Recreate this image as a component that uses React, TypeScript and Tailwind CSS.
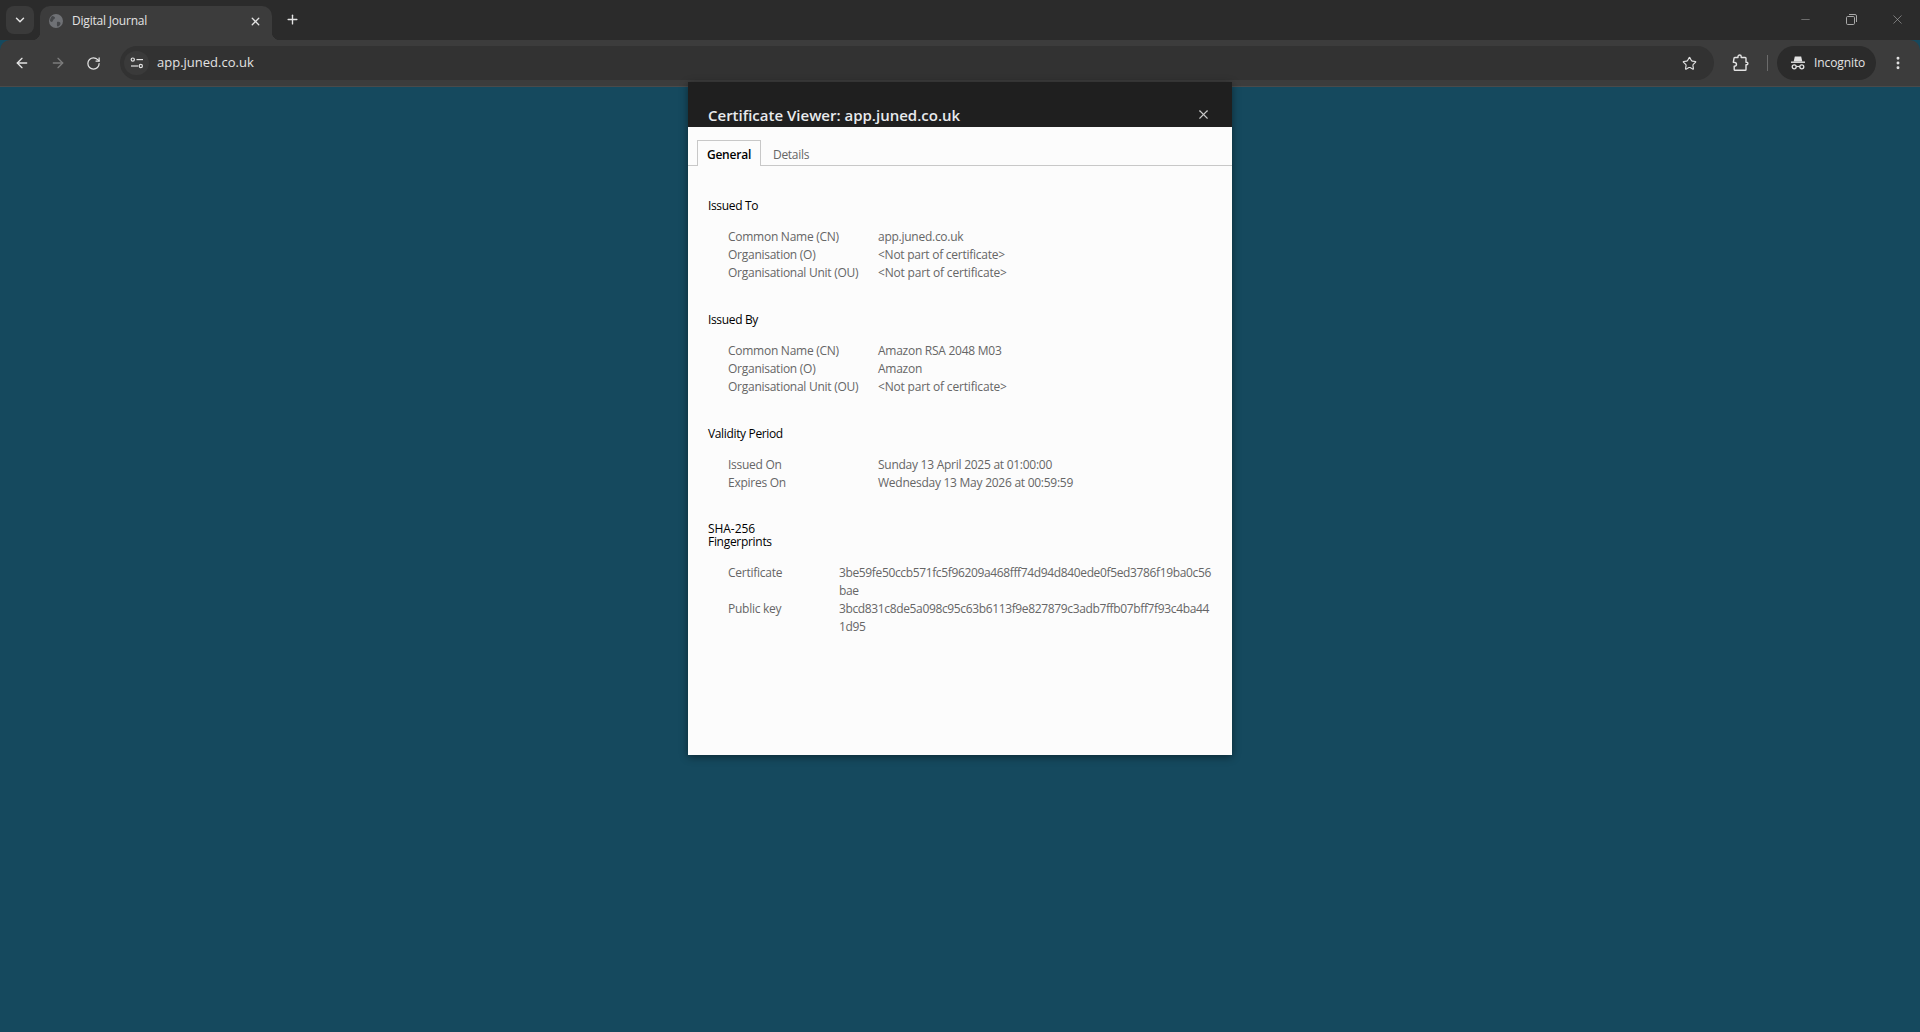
import React from "react";
import { X, Plus, ChevronDown, ArrowLeft, ArrowRight, RotateCw, Star, Minus, EllipsisVertical } from "lucide-react";

const font = "font-['Open_Sans','Noto_Sans',sans-serif]";

function Row({ label, value, narrow }: { label: string; value: React.ReactNode; narrow?: boolean }) {
  return (
    <div className={narrow ? "grid grid-cols-[111px_1fr]" : "grid grid-cols-[150px_1fr]"}>
      <div className="whitespace-nowrap">{label}</div>
      <div className={narrow ? "whitespace-nowrap tracking-[-0.36px]" : "whitespace-nowrap"}>{value}</div>
    </div>
  );
}

function Section({ title, children, className }: { title: React.ReactNode; children: React.ReactNode; className?: string }) {
  return (
    <section className={className}>
      <h2 className="text-[12px] leading-[18px] tracking-[-0.35px] text-black">{title}</h2>
      <div className="mt-[13px] pl-[20px] text-[12px] leading-[18px] tracking-[-0.26px] text-[#666666]">{children}</div>
    </section>
  );
}

function IncognitoIcon() {
  return (
    <svg width="16" height="16" viewBox="0 0 16 16" className="text-[#e3e3e3]" fill="none" stroke="currentColor">
      <path d="M3.700 6.400 4.800 1.500h6.400l1.100 4.900z" fill="currentColor" stroke="none" />
      <path d="M1 7.200h14" strokeWidth="1.400" />
      <circle cx="4.200" cy="11.800" r="2" strokeWidth="1.300" />
      <circle cx="11.800" cy="11.800" r="2" strokeWidth="1.300" />
      <path d="M6.200 11.500h3.600" strokeWidth="1.200" />
    </svg>
  );
}

function ExtensionIcon() {
  return (
    <svg width="17" height="18" viewBox="0 0 17 18" fill="none" stroke="#e3e3e3" strokeWidth="1.400" strokeLinejoin="round">
      <path d="M6 3.500V2.600a1.600 1.600 0 0 1 3.200 0v.9h4a.8.800 0 0 1 .8.800v3.900h.6a1.300 1.300 0 0 1 0 2.600H14v4.600a.8.800 0 0 1-.8.800H3a.8.800 0 0 1-.8-.8v-3.300c1.600 0 2.300-.8 2.300-1.900S3.400 8.300 1.300 8.300l.7-4a.8.800 0 0 1 .8-.8z" />
    </svg>
  );
}

function RestoreIcon() {
  return (
    <svg width="11" height="11" viewBox="0 0 11 11" fill="none" stroke="#a8a8a8">
      <rect x="0.500" y="2.500" width="8" height="8" rx="1.200" />
      <path d="M3 .5h6a1.500 1.500 0 0 1 1.500 1.500v6" />
    </svg>
  );
}

function TuneIcon() {
  return (
    <svg width="14" height="12" viewBox="0 0 14 12" fill="none" stroke="#e3e3e3" strokeWidth="1.200">
      <circle cx="2.800" cy="2.600" r="1.600" />
      <path d="M6.500 2.600H13" />
      <circle cx="10.800" cy="9" r="1.600" />
      <path d="M1 9h7.200" />
    </svg>
  );
}

function Globe() {
  return (
    <svg width="14" height="14" viewBox="0 0 14 14">
      <circle cx="7" cy="7" r="7" fill="#6f7175" />
      <path d="M3 2c2 .2 3 1 3 2S4.500 5 4 6.500 3 8.500 1 7C1 5 2 3 3 2zM8 8c2-.8 3.500 0 3.500 1.500S9.500 13 8.500 12.500 8 10 8 8z" fill="#45474a" />
    </svg>
  );
}

export default function App() {
  return (
    <div className={`flex h-[1032px] w-full flex-col overflow-hidden bg-[#15495e] ${font}`}>
      <header className="flex h-10 shrink-0 items-start bg-[#2b2b2b] pl-[6px] pr-0">
        <button className="mt-[6px] flex h-7 w-7 items-center justify-center rounded-lg bg-[#3a3a3a] text-[#e3e3e3]">
          <ChevronDown size={14} strokeWidth={2.500} />
        </button>
        <div className="relative ml-[6px] mt-[6px] flex h-[34px] w-[232px] items-center rounded-t-[10px] bg-[#3c3c3c] pb-[4px] pl-[9px] pr-[10px]">
          <span className="absolute bottom-0 left-[-8px] h-2 w-2 bg-[radial-gradient(circle_at_0_0,transparent_8px,#3c3c3c_8.500px)]" />
          <span className="absolute bottom-0 right-[-8px] h-2 w-2 bg-[radial-gradient(circle_at_100%_0,transparent_8px,#3c3c3c_8.500px)]" />
          <Globe />
          <span className="ml-[9px] flex-1 text-[12px] tracking-[-0.2px] text-[#e3e3e3]">Digital Journal</span>
          <X size={13} strokeWidth={2.400} className="text-[#e3e3e3]" />
        </div>
        <Plus size={15} strokeWidth={2.200} className="ml-[13px] mt-[12px] text-[#e3e3e3]" />
        <div className="ml-auto flex h-10 items-center pb-[1px]">
          <div className="flex w-[46px] justify-center"><Minus size={13} strokeWidth={1} className="text-[#a8a8a8]" /></div>
          <div className="flex w-[46px] justify-center"><RestoreIcon /></div>
          <div className="flex w-[46px] justify-center"><X size={15} strokeWidth={1} className="text-[#a8a8a8]" /></div>
        </div>
      </header>

      <nav className="z-0 flex h-[47px] shrink-0 items-start rounded-t-[10px] border-b border-[#4a4a4a] bg-[#3c3c3c] pl-[14px] pt-[6px]">
        <div className="flex h-[34px] items-center gap-[20px] text-[#e3e3e3]">
          <ArrowLeft size={16} strokeWidth={2} />
          <ArrowRight size={16} strokeWidth={2} className="text-[#7c7c7c]" />
          <RotateCw size={15} strokeWidth={2} />
        </div>
        <div className="ml-[19px] flex h-[34px] w-[1594px] items-center rounded-full bg-[#323232] pl-[4px] pr-[17px]">
          <div className="flex h-[24px] w-[25px] items-center justify-center rounded-full bg-[#3a3a3a]"><TuneIcon /></div>
          <span className="ml-[8px] flex-1 text-[13px] text-[#e3e3e3]">app.juned.co.uk</span>
          <Star size={15} strokeWidth={1.800} className="text-[#e3e3e3]" />
        </div>
        <div className="flex h-[34px] items-center">
          <div className="ml-[18px]"><ExtensionIcon /></div>
          <div className="ml-[18px] h-[16px] w-px bg-[#6b6b6b]" />
          <div className="ml-[9px] flex h-[34px] w-[99px] items-center rounded-full bg-[#2b2b2b] pl-[13px]">
            <IncognitoIcon />
            <span className="ml-[8px] text-[12px] tracking-[-0.1px] text-[#e3e3e3]">Incognito</span>
          </div>
          <EllipsisVertical size={16} strokeWidth={2.400} className="ml-[14px] text-[#e3e3e3]" />
        </div>
      </nav>

      <main className="z-10 mt-[-5px] flex flex-1 justify-center">
        <div className="h-[673px] w-[544px] bg-[#fcfcfc] shadow-[0_2px_8px_rgba(0,0,0,0.45)]">
          <div className="flex h-[45px] items-end justify-between bg-[#1f1f1f] pl-[20px] pr-[21px]">
            <h1 className="pb-[2px] text-[15px] font-semibold leading-[20px] text-[#e8eaed]">Certificate Viewer: app.juned.co.uk</h1>
            <X size={15} strokeWidth={1.800} className="mb-[5px] text-[#c8c8c8]" />
          </div>
          <div className="flex h-[39px] items-end border-b border-[#c8c8c8] pl-[9px] text-[12px] tracking-[-0.2px]">
            <div className="flex h-[26px] w-[64px] translate-y-px items-center justify-center border border-b-0 border-[#c8c8c8] bg-[#fcfcfc] pt-[3px] font-semibold text-black">General</div>
            <div className="ml-[12px] flex h-[26px] translate-y-px items-center pt-[3px] tracking-[-0.3px] text-[#666666]">Details</div>
          </div>
          <div className="px-[20px] pt-[31px]">
            <Section title="Issued To">
              <Row label="Common Name (CN)" value="app.juned.co.uk" />
              <Row label="Organisation (O)" value="<Not part of certificate>" />
              <Row label="Organisational Unit (OU)" value={<span className="tracking-[-0.18px]">{"<Not part of certificate>"}</span>} />
            </Section>
            <Section title="Issued By" className="mt-[29px]">
              <Row label="Common Name (CN)" value="Amazon RSA 2048 M03" />
              <Row label="Organisation (O)" value="Amazon" />
              <Row label="Organisational Unit (OU)" value={<span className="tracking-[-0.18px]">{"<Not part of certificate>"}</span>} />
            </Section>
            <Section title="Validity Period" className="mt-[29px]">
              <Row label="Issued On" value="Sunday 13 April 2025 at 01:00:00" />
              <Row label="Expires On" value="Wednesday 13 May 2026 at 00:59:59" />
            </Section>
            <section className="mt-[30px]">
              <h2 className="text-[12px] leading-[13px] tracking-[-0.3px] text-black"><span className="tracking-[-0.05px]">SHA-256</span><br />Fingerprints</h2>
              <div className="mt-[16px] pl-[20px] text-[12px] leading-[18px] tracking-[-0.26px] text-[#666666]">
                <Row narrow label="Certificate" value={<>3be59fe50ccb571fc5f96209a468fff74d94d840ede0f5ed3786f19ba0c56<br />bae</>} />
                <Row narrow label="Public key" value={<>3bcd831c8de5a098c95c63b6113f9e827879c3adb7ffb07bff7f93c4ba44<br />1d95</>} />
              </div>
            </section>
          </div>
        </div>
      </main>
    </div>
  );
}
